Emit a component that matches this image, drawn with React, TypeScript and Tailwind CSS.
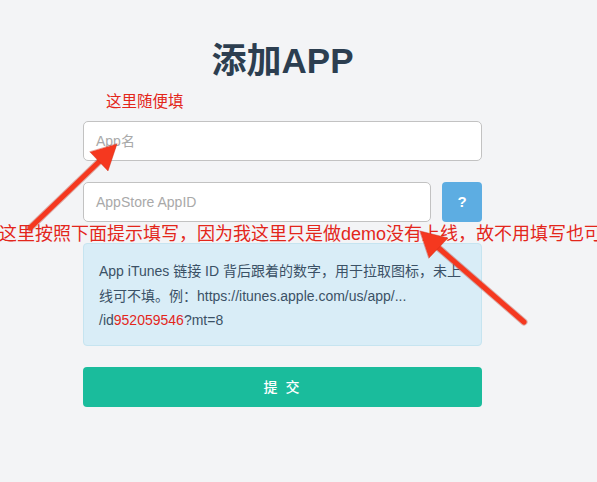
import React from "react";

const font = '"Liberation Sans", "Noto Sans CJK SC", sans-serif';

export default function App() {
  return (
    <div
      className="relative w-[597px] h-[482px] overflow-hidden bg-[#f3f4f6]"
      style={{ fontFamily: font }}
    >
      <div className="ml-[83px] w-[399px] flex flex-col">
        <h1 className="pt-[41px] h-[81px] leading-[40px] text-center text-[35px] font-bold text-[#2c3e50]">
          添加APP
        </h1>
        <div className="mt-[40px] h-[40px] rounded-[5px] border-[1.5px] border-[#c2c2c2] bg-white flex items-center px-[12px] text-[14px] text-[#a9a9a9]">
          App名
        </div>
        <div className="mt-[21px] flex gap-[11px]">
          <div className="flex-1 h-[40px] rounded-[5px] border-[1.5px] border-[#c2c2c2] bg-white flex items-center px-[12px] text-[14px] text-[#a9a9a9]">
            AppStore AppID
          </div>
          <div className="w-[40px] h-[40px] rounded-[4px] bg-[#5dade2] flex items-center justify-center text-white text-[15px] font-bold">
            ?
          </div>
        </div>
        <div className="mt-[21px] h-[103px] rounded-[4px] border border-[#c6e4f0] bg-[#d9edf7] px-[15px] pt-[15px] text-[14px] leading-[24.5px] text-[#3b5166]">
          App iTunes 链接 ID 背后跟着的数字，用于拉取图标，未上线可不填。例：https://itunes.apple.com/us/app/...
          <br />
          /id<span className="text-[#e3261b]">952059546</span>?mt=8
        </div>
        <div className="mt-[21px] h-[40px] rounded-[4px] bg-[#1abc9c] flex items-center justify-center text-white text-[14px] font-medium tracking-[2px]">
          提 交
        </div>
      </div>

      {/* annotations overlay */}
      <div className="absolute left-[106px] top-[92px] text-[15.5px] leading-[20px] text-[#e3261b]">
        这里随便填
      </div>
      <div className="absolute left-[-1px] top-[223px] whitespace-nowrap text-[18px] leading-[22px] text-[#e3261b]">
        这里按照下面提示填写，因为我这里只是做demo没有上线，故不用填写也可
      </div>
      <svg
        className="absolute left-0 top-0 pointer-events-none"
        width="597"
        height="482"
        viewBox="0 0 597 482"
      >
        <g strokeLinecap="round">
          <line x1="30" y1="228" x2="104" y2="157" stroke="#b02414" strokeOpacity="0.35" strokeWidth="7" />
          <line x1="30" y1="228" x2="104" y2="157" stroke="#f5381f" strokeWidth="5" />
          <polygon points="117,144 108,171 90,152" fill="#f5381f" stroke="#c92a17" strokeOpacity="0.4" strokeWidth="1" strokeLinejoin="round" />

          <line x1="524" y1="322" x2="434" y2="244" stroke="#b02414" strokeOpacity="0.35" strokeWidth="7" />
          <line x1="524" y1="322" x2="434" y2="244" stroke="#f5381f" strokeWidth="5" />
          <polygon points="420,231 448,238 429,258" fill="#f5381f" stroke="#c92a17" strokeOpacity="0.4" strokeWidth="1" strokeLinejoin="round" />
        </g>
      </svg>
    </div>
  );
}
